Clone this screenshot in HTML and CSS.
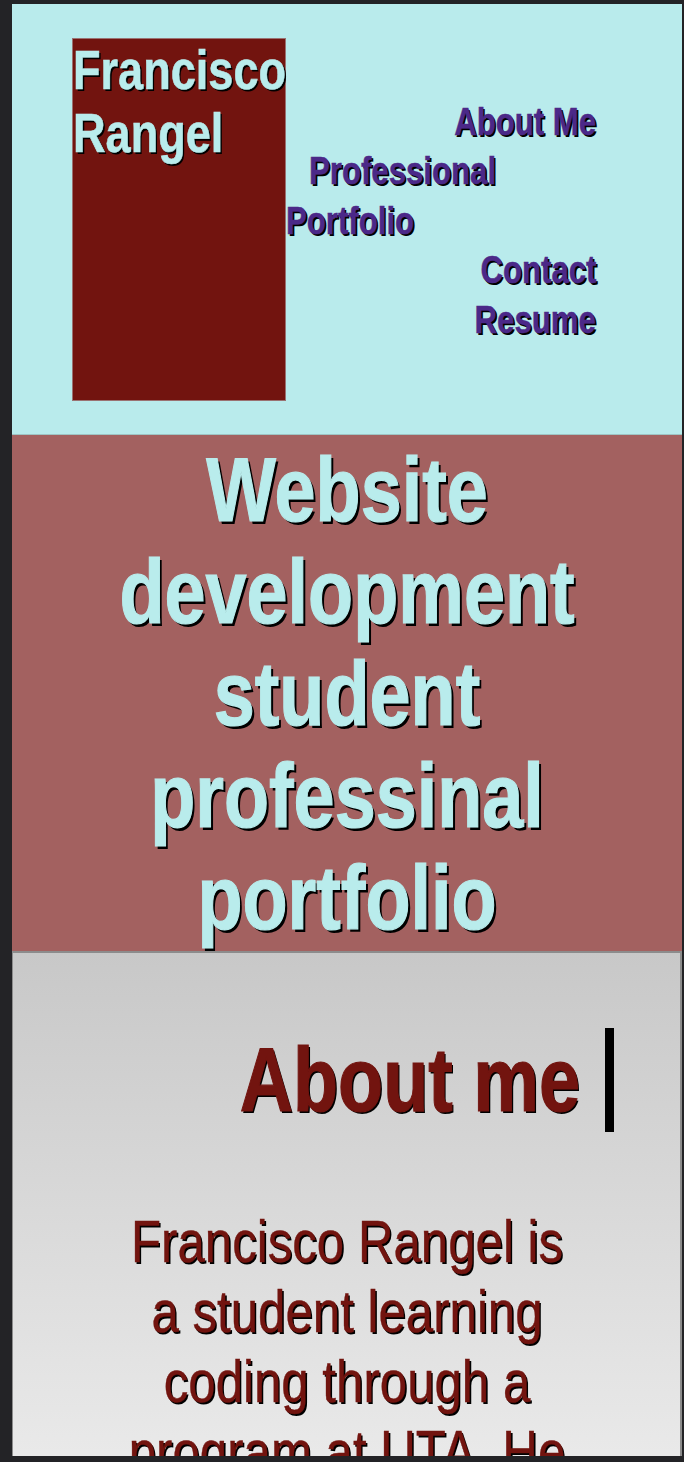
FILE: index.html
```html
<!DOCTYPE html>
<html lang="en">
<head>
<meta charset="utf-8">
<title>Francisco Rangel</title>
<link rel="stylesheet" href="styles.css">
</head>
<body>
<div class="screen">
  <header class="site-header">
    <div class="brand"><h1 class="brand-name">Francisco Rangel</h1></div>
    <nav class="nav">
      <a class="nav-link nav-right" href="#about">About Me</a>
      <a class="nav-link nav-pro" href="#portfolio">Professional</a>
      <a class="nav-link nav-left" href="#portfolio">Portfolio</a>
      <a class="nav-link nav-right" href="#contact">Contact</a>
      <a class="nav-link nav-right" href="#resume">Resume</a>
    </nav>
  </header>
  <section class="hero">
    <h2 class="hero-title">Website development student professinal portfolio</h2>
  </section>
  <section class="about" id="about">
    <div class="about-head">
      <div class="about-cursor"><h2 class="about-title">About me</h2></div>
    </div>
    <p class="about-text">Francisco Rangel is a student learning coding through a program at UTA. He</p>
  </section>
</div>
</body>
</html>
```
FILE: styles.css
```css
html, body {
  margin: 0;
  padding: 0;
}
body {
  background: #232326;
  padding: 4px 2px 6px 12px;
  font-family: "Liberation Sans", Arial, sans-serif;
}
.screen {
  height: 1452px;
  overflow: hidden;
  background: #b9ebec;
}
.site-header {
  display: flex;
  align-items: center;
  height: 431px;
  box-sizing: border-box;
  padding: 34px 85px 34px 60px;
  background: #b9ebec;
  border-bottom: 1px solid #9fc4c4;
}
.brand {
  width: 212px;
  height: 361px;
  flex: none;
  background: #72140f;
  border: 1px solid #9a7272;
}
.brand-name {
  margin: 0;
  width: 280px;
  font-size: 55px;
  line-height: 63px;
  font-weight: 700;
  color: #b9ecec;
  -webkit-text-stroke: 0.6px #b9ecec;
  text-shadow: 2px 2px 0 #000;
  transform: scaleX(0.82);
  transform-origin: left top;
}
.nav {
  width: 310px;
  min-width: 0;
  flex: none;
  display: flex;
  flex-direction: column;
  padding-top: 5px;
}
.nav-link {
  font-size: 38px;
  line-height: 49.5px;
  font-weight: 700;
  color: #4b2888;
  -webkit-text-stroke: 0.5px #4b2888;
  text-decoration: none;
  text-shadow: 2px 2px 0 #000;
  white-space: nowrap;
  transform: scaleX(0.82);
}
.nav-right {
  align-self: flex-end;
  transform-origin: right center;
}
.nav-pro {
  align-self: flex-end;
  margin-right: 100px;
  transform-origin: right center;
}
.nav-left {
  align-self: flex-start;
  transform-origin: left center;
}
.hero {
  background: #a36160;
  height: 516px;
  box-sizing: border-box;
  padding-top: 4px;
  text-align: center;
}
.hero-title {
  margin: 0;
  font-size: 90px;
  line-height: 102px;
  font-weight: 700;
  color: #b9ecec;
  -webkit-text-stroke: 1.2px #b9ecec;
  text-shadow: 3px 3px 0 #000;
  transform: scaleX(0.82);
  transform-origin: center top;
}
.about {
  min-height: 600px;
  border: 1px solid #8c8c8c;
  border-top-width: 2px;
  border-right-width: 2px;
  background: linear-gradient(to bottom, #c8c8c8 0, #e9e9e9 500px, #ececec 100%);
  padding-top: 75px;
}
.about-head {
  display: flex;
  justify-content: flex-end;
  padding-right: 66px;
}
.about-cursor {
  padding-right: 25px;
  border-right: 9px solid #000;
}
.about-title {
  margin: 0;
  font-size: 90px;
  line-height: 104px;
  font-weight: 700;
  color: #72140f;
  -webkit-text-stroke: 1.2px #72140f;
  text-shadow: 2px 2px 0 #000;
  white-space: nowrap;
  transform: scaleX(0.82);
  transform-origin: right center;
}
.about-text {
  width: 550px;
  margin: 75px auto 0;
  text-align: center;
  font-size: 60px;
  line-height: 70px;
  font-weight: 400;
  color: #72140f;
  -webkit-text-stroke: 0.4px #72140f;
  text-shadow: 2px 2px 0 #000;
  transform: scaleX(0.82);
  transform-origin: center top;
}
```
